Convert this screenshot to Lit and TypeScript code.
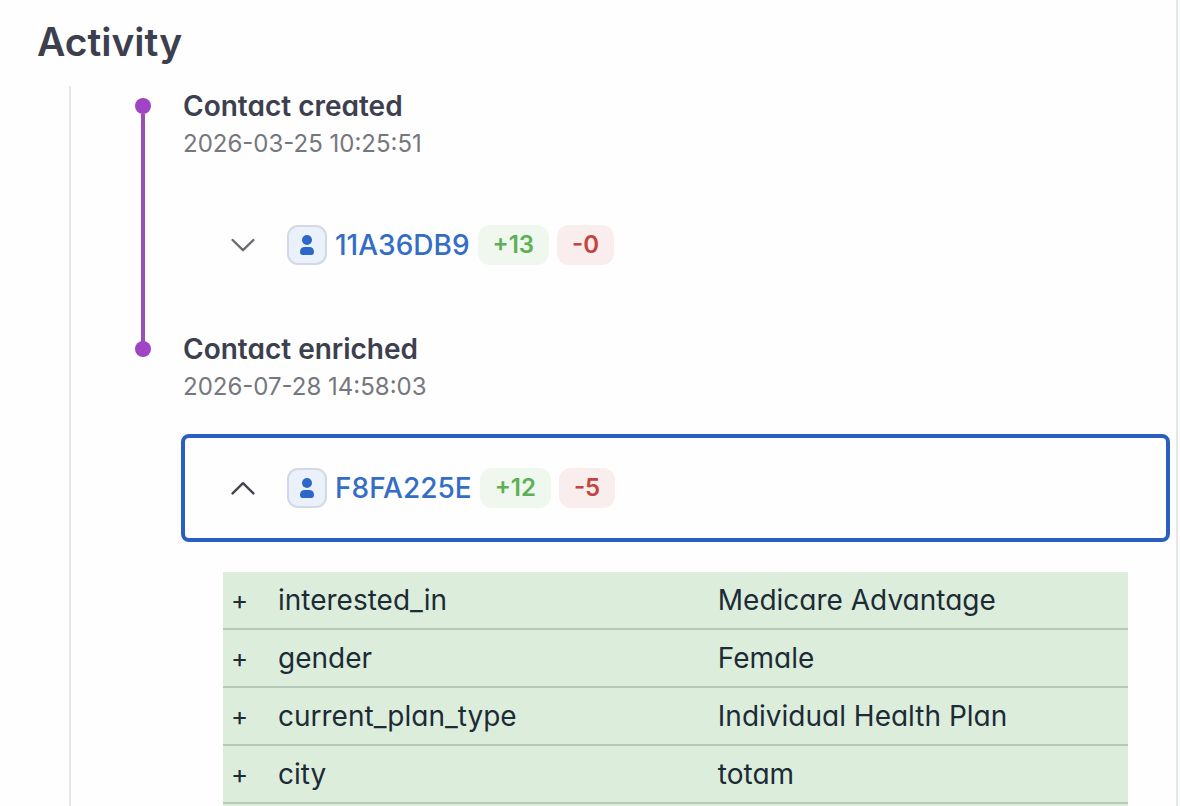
import { LitElement, html, css, svg, nothing } from "lit";
import { customElement, state } from "lit/decorators.js";

interface Change {
  field: string;
  value: string;
}

interface ActivityEvent {
  title: string;
  time: string;
  contact: string;
  added: number;
  removed: number;
  changes: Change[];
}

const EVENTS: ActivityEvent[] = [
  {
    title: "Contact created",
    time: "2026-03-25 10:25:51",
    contact: "11A36DB9",
    added: 13,
    removed: 0,
    changes: [],
  },
  {
    title: "Contact enriched",
    time: "2026-07-28 14:58:03",
    contact: "F8FA225E",
    added: 12,
    removed: 5,
    changes: [
      { field: "interested_in", value: "Medicare Advantage" },
      { field: "gender", value: "Female" },
      { field: "current_plan_type", value: "Individual Health Plan" },
      { field: "city", value: "totam" },
    ],
  },
];

const chevronDown = svg`<path d="M1.6 7 L12 17.2 L22.4 7" />`;
const chevronUp = svg`<path d="M1.6 17.4 L12 7.2 L22.4 17.4" />`;

@customElement("app-root")
export class AppRoot extends LitElement {
  static styles = css`
    :host {
      display: block;
      background: #fdfefe;
      font-family: Inter, "Liberation Sans", sans-serif;
      font-feature-settings: "cv11";
      font-size: 28px;
      line-height: 36px;
      color: #1c2b36;
    }
    * {
      box-sizing: border-box;
    }
    .panel {
      display: flex;
      flex-direction: column;
      min-height: 100vh;
      margin-right: 2px;
      padding-top: 18px;
      border-right: 2px solid #e4e6e9;
      background: #fefefe;
    }
    .heading {
      margin: 0 0 20px 37px;
      font-size: 39px;
      line-height: 48px;
      font-weight: 600;
      color: #3c404e;
    }
    .timeline {
      flex: 1;
      margin: 0 0 0 69px;
      padding: 0 8px 0 64px;
      border-left: 2px solid #e5e5e7;
      list-style: none;
    }
    .event {
      display: grid;
      grid-template-columns: 16px minmax(0, 1fr);
      column-gap: 32px;
    }
    .rail {
      display: flex;
      flex-direction: column;
      align-items: center;
      padding-top: 12px;
    }
    .dot {
      width: 16px;
      height: 16px;
      border-radius: 50%;
      background: #a043c4;
    }
    .line {
      flex: 1;
      width: 4px;
      margin-bottom: -14px;
      background: #984fb8;
    }
    .body {
      padding-bottom: 34px;
    }
    .event:last-child .body {
      padding-bottom: 0;
    }
    .title {
      margin: 0;
      font-size: 28px;
      line-height: 40px;
      font-weight: 600;
      color: #3c404e;
    }
    .time {
      display: block;
      font-size: 24px;
      line-height: 36px;
      color: #76777c;
    }
    .toggle {
      display: flex;
      align-items: center;
      width: calc(100% - 4px);
      height: 100px;
      margin: 33px 2px 0;
      padding: 0 46px;
      border: 0;
      border-radius: 4px;
      background: none;
      font: inherit;
      font-feature-settings: inherit;
      color: #6b6c72;
      text-align: left;
      cursor: pointer;
    }
    .toggle.open {
      outline: 4px solid #2a5fc1;
      color: #45464d;
    }
    .chevron {
      width: 24px;
      height: 24px;
      margin-right: 32px;
      fill: none;
      stroke: currentColor;
      stroke-width: 2.4;
      stroke-linecap: round;
      stroke-linejoin: round;
    }
    .avatar {
      display: flex;
      align-items: center;
      justify-content: center;
      width: 40px;
      height: 40px;
      margin-right: 8px;
      border: 2px solid #d2d8e4;
      border-radius: 11px;
      background: #ebf1fb;
    }
    .person {
      width: 16px;
      height: 22px;
      fill: #2c68c8;
    }
    .contact {
      margin-right: 8px;
      font-weight: 500;
      color: #346dc5;
    }
    .chip {
      height: 40px;
      margin-right: 8px;
      padding: 0 15px;
      border-radius: 12px;
      font-size: 24px;
      line-height: 40px;
      font-weight: 600;
    }
    .added {
      background: #eff7ef;
      color: #5bb153;
    }
    .removed {
      background: #f9eded;
      color: #c5443e;
    }
    .diff {
      margin: 34px 40px 0;
      padding-bottom: 2px;
      background: #dceedb;
    }
    .changes {
      width: 100%;
      table-layout: fixed;
      border-collapse: collapse;
    }
    .sign-col {
      width: 45px;
    }
    .field-col {
      width: 48.6%;
    }
    .sign,
    .field,
    .value {
      padding: 10px 10px;
      border-bottom: 2px solid #b4c9b7;
      font-weight: 400;
      text-align: left;
    }
    .sign {
      padding: 10px 8px;
      font-size: 26px;
    }
  `;

  @state() private open = new Set<string>(["F8FA225E"]);

  private toggle(id: string) {
    const next = new Set(this.open);
    if (!next.delete(id)) next.add(id);
    this.open = next;
  }

  private renderChanges(changes: Change[]) {
    return html`
      <div class="diff">
        <table class="changes">
          <colgroup>
            <col class="sign-col" />
            <col class="field-col" />
            <col />
          </colgroup>
          <tbody>
            ${changes.map(
              (c) => html`<tr>
                <td class="sign">+</td>
                <th class="field" scope="row">${c.field}</th>
                <td class="value">${c.value}</td>
              </tr>`
            )}
          </tbody>
        </table>
      </div>
    `;
  }

  private renderEvent(e: ActivityEvent, last: boolean) {
    const open = this.open.has(e.contact);
    return html`
      <li class="event">
        <div class="rail">
          <span class="dot"></span>
          ${last ? nothing : html`<span class="line"></span>`}
        </div>
        <div class="body">
          <h3 class="title">${e.title}</h3>
          <time class="time">${e.time}</time>
          <button
            class="toggle ${open ? "open" : ""}"
            type="button"
            aria-expanded=${open ? "true" : "false"}
            @click=${() => this.toggle(e.contact)}
          >
            <svg class="chevron" viewBox="0 0 24 24" aria-hidden="true">
              ${open ? chevronUp : chevronDown}
            </svg>
            <span class="avatar">
              <svg class="person" viewBox="0 0 16 22" aria-hidden="true">
                <circle cx="8" cy="6" r="5" />
                <path
                  d="M5 13 H11 C13.5 13 15 15.2 15 18 C15 20 14 21 12.5 21 H3.5 C2 21 1 20 1 18 C1 15.2 2.5 13 5 13 Z"
                />
              </svg>
            </span>
            <span class="contact">${e.contact}</span>
            <span class="chip added">+${e.added}</span>
            <span class="chip removed">-${e.removed}</span>
          </button>
          ${open && e.changes.length ? this.renderChanges(e.changes) : nothing}
        </div>
      </li>
    `;
  }

  render() {
    return html`
      <main class="panel">
        <h2 class="heading">Activity</h2>
        <ol class="timeline">
          ${EVENTS.map((e, i) => this.renderEvent(e, i === EVENTS.length - 1))}
        </ol>
      </main>
    `;
  }
}
